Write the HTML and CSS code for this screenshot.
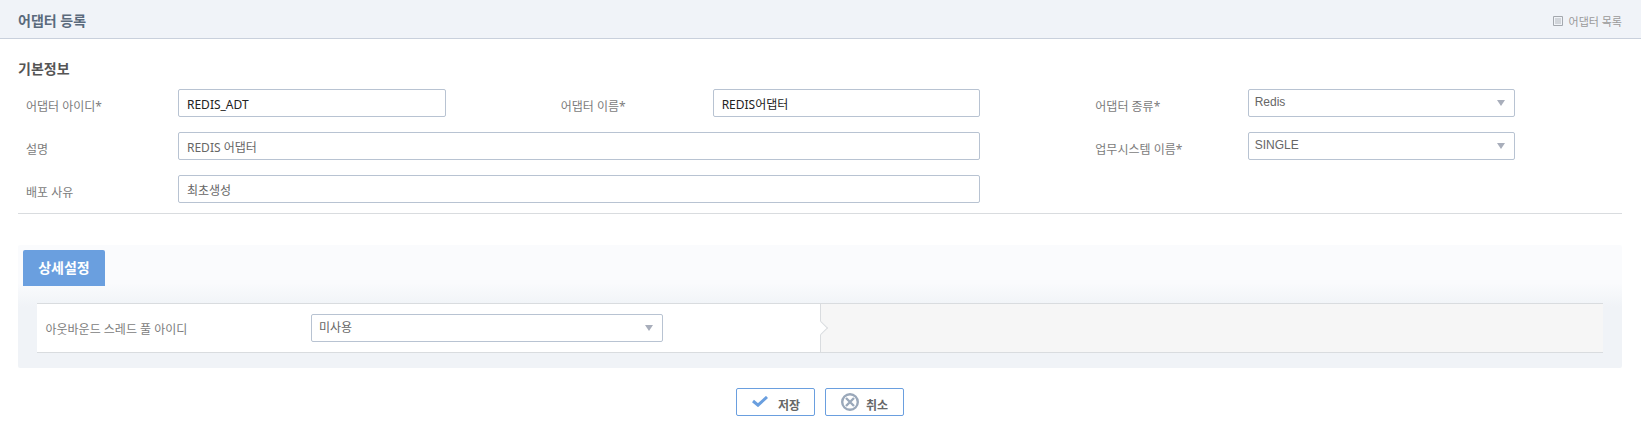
FILE: index.html
```html
<!DOCTYPE html>
<html lang="ko">
<head>
<meta charset="utf-8">
<title>어댑터 등록</title>
<link rel="stylesheet" href="styles.css">
</head>
<body>
<header class="page-head">
  <h1 class="page-title">어댑터 등록</h1>
  <a class="list-link">
    <svg class="list-icon" width="10" height="10" viewBox="0 0 10 10"><path d="M.5.5h9v9h-9z" fill="none" stroke="#a4a8ae"/><path d="M2 3h6M2 5h6M2 7h6" fill="none" stroke="#b4b8be"/></svg>
    어댑터 목록
  </a>
</header>
<main class="content">
  <h2 class="section-title">기본정보</h2>
  <div class="form-grid">
    <div class="field">
      <label class="field-label">어댑터 아이디*</label>
      <div class="input strong">REDIS_ADT</div>
    </div>
    <div class="field">
      <label class="field-label">어댑터 이름*</label>
      <div class="input strong">REDIS어댑터</div>
    </div>
    <div class="field">
      <label class="field-label">어댑터 종류*</label>
      <div class="input select latin">Redis<span class="caret"></span></div>
    </div>
    <div class="field span2">
      <label class="field-label">설명</label>
      <div class="input">REDIS 어댑터</div>
    </div>
    <div class="field">
      <label class="field-label">업무시스템 이름*</label>
      <div class="input select latin">SINGLE<span class="caret"></span></div>
    </div>
    <div class="field span2">
      <label class="field-label">배포 사유</label>
      <div class="input">최초생성</div>
    </div>
  </div>
  <section class="detail">
    <div class="tab">상세설정</div>
    <div class="detail-row">
      <div class="detail-main">
        <label class="detail-label">아웃바운드 스레드 풀 아이디</label>
        <div class="input select detail-select">미사용<span class="caret"></span></div>
      </div>
      <div class="detail-side"></div>
    </div>
  </section>
  <div class="actions">
    <button class="btn" type="button">
      <svg class="btn-icon" width="16" height="11" viewBox="0 0 16 11"><path d="M1 5l5 4.2L15 1" fill="none" stroke="#6a9fdf" stroke-width="3"/></svg>
      <span class="btn-save">저장</span>
    </button>
    <button class="btn" type="button">
      <svg width="18" height="18" viewBox="0 0 18 18"><circle cx="9" cy="9" r="7.8" fill="none" stroke="#9aa8ba" stroke-width="2.4"/><path d="M5 5l8 8M13 5l-8 8" fill="none" stroke="#9aa8ba" stroke-width="2.4"/></svg>
      <span>취소</span>
    </button>
  </div>
</main>
</body>
</html>
```
FILE: styles.css
```css
* { box-sizing: border-box; }
html, body { margin: 0; padding: 0; }
body {
  background: #fff;
  color: #666;
  font-family: "Noto Sans", "Noto Sans CJK KR", sans-serif;
  font-size: 12px;
}
.page-head {
  height: 39px;
  background: #f0f3f8;
  border-bottom: 1px solid #c9d0dc;
  padding: 0 18px;
  display: flex;
  align-items: center;
  justify-content: space-between;
}
.page-title {
  margin: 0;
  padding-top: 2px;
  font-size: 14px;
  font-weight: 700;
  color: #5a6a7c;
}
.list-link {
  display: flex;
  align-items: center;
  gap: 6px;
  font-size: 11px;
  color: #9a9a9a;
  padding-top: 3px;
  margin-right: 1px;
}
.content { padding: 0 19px 0 18px; }
.section-title {
  margin: 0;
  padding-top: 20px;
  height: 50px;
  font-size: 14px;
  line-height: 20px;
  font-weight: 700;
  color: #555;
}
.form-grid {
  display: grid;
  grid-template-columns: repeat(3, 1fr);
  row-gap: 15px;
  padding-bottom: 10px;
  border-bottom: 1px solid #d9dcdf;
}
.field { display: flex; align-items: center; padding-left: 8px; }
.span2 { grid-column: span 2; }
.field-label { width: 152.3px; flex: none; color: #7c7c7c; padding-top: 6px; }
.input {
  flex: 1;
  height: 28px;
  border: 1px solid #b8c3d2;
  border-radius: 2px;
  background: #fff;
  padding: 2px 7.7px 0;
  line-height: 26px;
  color: #666;
  position: relative;
}
.field > .input { max-width: 267.4px; }
.span2 > .input { max-width: 802px; }
.strong { color: #222; }
.latin {
  font-family: "Liberation Sans", "Noto Sans CJK KR", sans-serif;
  padding: 0 6px;
  line-height: 24px;
}
.caret {
  position: absolute;
  right: 9.5px;
  top: 10px;
  border-left: 4.5px solid transparent;
  border-right: 4.5px solid transparent;
  border-top: 6px solid #a8aebb;
}
.detail {
  margin-top: 31px;
  height: 123px;
  padding: 5px 19px 0 5px;
  border-radius: 2px;
  background: linear-gradient(#fafbfd 0, #fafbfd 38px, #f0f3f7 62px, #f0f3f7 100%);
}
.tab {
  width: 82px;
  height: 36px;
  background: #6a9fdf;
  border-radius: 2px 2px 0 0;
  color: #fff;
  font-size: 14px;
  font-weight: 700;
  line-height: 36px;
  text-align: center;
}
.detail-row {
  display: flex;
  height: 50px;
  margin: 17px 0 0 14px;
  border-top: 1px solid #d9dcdf;
  border-bottom: 1px solid #d9dcdf;
  background: #fff;
}
.detail-main {
  width: 783px;
  flex: none;
  display: flex;
  align-items: center;
  padding-left: 8.5px;
}
.detail-label { width: 265.5px; flex: none; color: #7c7c7c; padding-top: 2px; }
.detail-select { flex: none; width: 352px; padding: 0 7px; line-height: 26px; }
.detail-side {
  flex: 1;
  background: #f6f6f6;
  border-left: 1px solid #d9dcdf;
  position: relative;
}
.detail-side::before {
  content: "";
  position: absolute;
  left: -5.5px;
  top: 19px;
  width: 9px;
  height: 9px;
  background: #fff;
  border-top: 1px solid #d9dcdf;
  border-right: 1px solid #d9dcdf;
  transform: rotate(45deg);
}
.actions {
  display: flex;
  justify-content: center;
  gap: 10px;
  margin-top: 20px;
}
.btn {
  width: 79px;
  height: 28px;
  border: 1px solid #6a9fdf;
  border-radius: 2px;
  background: #fff;
  display: flex;
  align-items: center;
  gap: 7px;
  padding: 0 0 0 15px;
  color: #666;
  font: 700 12px "Noto Sans", "Noto Sans CJK KR", sans-serif;
}
.btn span { padding-top: 5px; }
.btn-save { margin-left: 3px; }
.btn-icon { margin-top: -2px; }
```
